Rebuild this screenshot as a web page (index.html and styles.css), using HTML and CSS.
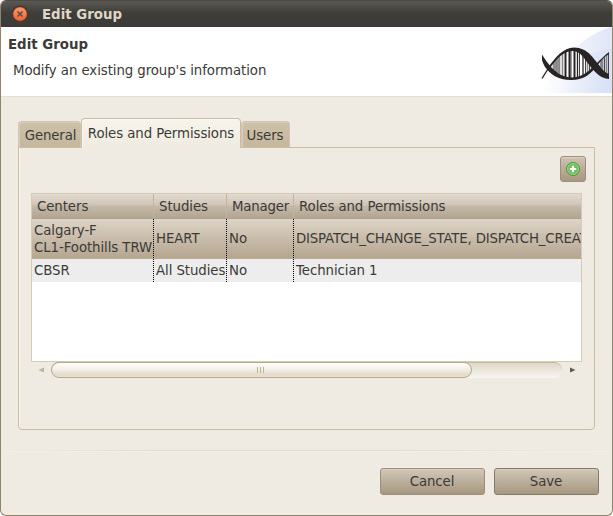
FILE: index.html
```html
<!DOCTYPE html>
<html lang="en">
<head>
<meta charset="utf-8">
<title>Edit Group</title>
<link rel="stylesheet" href="styles.css">
</head>
<body>
<div class="window">
  <div class="titlebar">
    <svg class="close" width="18" height="18" viewBox="0 0 18 18">
      <defs><linearGradient id="cl" x1="0" y1="0" x2="0" y2="1"><stop offset="0" stop-color="#f79b76"/><stop offset=".5" stop-color="#f37f50"/><stop offset="1" stop-color="#f0622f"/></linearGradient></defs>
      <circle cx="9" cy="9" r="8.6" fill="#2b2926"/>
      <circle cx="9" cy="9" r="8.4" fill="none" stroke="#55524b" stroke-width=".6"/>
      <circle cx="9" cy="9" r="7" fill="url(#cl)" stroke="#b5502b" stroke-width=".7"/>
      <path d="M6.5 6.500l5 5M11.500 6.500l-5 5" stroke="#5c4a42" stroke-width="1.500"/>
    </svg>
    <span class="title">Edit Group</span>
  </div>
  <header class="banner">
    <div>
      <h1>Edit Group</h1>
      <p>Modify an existing group's information</p>
    </div>
    <svg class="dna" width="72" height="66" viewBox="540 27 72 66">
      <defs>
        <linearGradient id="bg" x1="0" y1="0" x2="1" y2="0"><stop offset="0" stop-color="#fff"/><stop offset="1" stop-color="#dfe6f8"/></linearGradient>
        <linearGradient id="bg2" x1="0" y1="0" x2="1" y2="0"><stop offset="0" stop-color="#d3dff6" stop-opacity="0"/><stop offset="1" stop-color="#cfdaf4"/></linearGradient>
        <clipPath id="lens"><path d="M549 67C556 57 563 49 574 49 585 49 590 58 596 66 588 75 580 79 571 79 560 78 555 73 549 67ZM596 66L609 53V76Z"/></clipPath>
      </defs>
      <path d="M540 93C560 60 585 33 612 27V93Z" fill="url(#bg)"/>
      <path d="M560 93C572 62 590 50 612 49V93Z" fill="url(#bg2)" opacity=".5"/>
      <g clip-path="url(#lens)">
        <rect x="553" y="45" width="40" height="36" fill="#fff"/>
        <path d="M553.500 45v36M556.500 45v36M559.500 45v36M562.500 45v36M587.500 45v36M591.500 45v36M594.500 45v36M602.500 45v36M606.500 45v36" stroke="#88888b" stroke-width="1.600"/>
        <path d="M555 45v36M558 45v36M571 45v36M579.500 45v36M585.500 45v36M589.500 45v36M601 45v36M604.500 45v36M608.500 45v36" stroke="#464447"/>
        <path d="M565.500 45v36M569.500 45v36M574.500 45v36" stroke="#282425" stroke-width="2"/>
        <path d="M577.500 45v36M583 45v36" stroke="#282425" stroke-width="1.300"/>
      </g>
      <path d="M542 78.500L549.500 66.500" stroke="#282425" stroke-width="1.400"/>
      <path d="M549 66C556 57 563 48 574 47.500 588 48 593 58 599 65 602 69.500 605 73 609 74V79C600 78.500 595 72 590 66 584 59 581 51.500 573 51 564 51 557 58 550 68Z" fill="#282425"/>
      <path d="M542 54.500C545 59 548 64 552 68 558 74 564 77.500 572 77.500 583 77 589 71 596 64 600 60 605 55 609 52V54C604 57 600 62 597 66 591 73 585 80 571 80 558 80 550 74 545 67 543.500 64 542.500 62 542 60Z" fill="#282425"/>
    </svg>
  </header>
  <main>
    <div class="tabs">
      <div class="tab general">General</div>
      <div class="tab active">Roles and Permissions</div>
      <div class="tab users">Users</div>
    </div>
    <section class="panel">
      <div class="toolbar">
        <button class="add" aria-label="Add">
          <svg width="16" height="16" viewBox="0 0 16 16"><circle cx="8" cy="8" r="6.500" fill="#72bd5c" stroke="#46963d"/><circle cx="8" cy="8" r="5.500" fill="none" stroke="#a5d997" stroke-width=".8"/><path d="M8 4.800v6.400M4.800 8h6.400" stroke="#fff" stroke-width="2.200"/></svg>
        </button>
      </div>
      <div class="table">
        <div class="row head"><div>Centers</div><div>Studies</div><div class="manager">Manager</div><div>Roles and Permissions</div></div>
        <div class="row selected"><div>Calgary-F<br>CL1-Foothills TRW</div><div>HEART</div><div>No</div><div class="permissions">DISPATCH_CHANGE_STATE, DISPATCH_CREAT</div></div>
        <div class="row alt"><div>CBSR</div><div>All Studies</div><div>No</div><div>Technician 1</div></div>
      </div>
      <div class="scroll">
        <svg width="20" height="16" viewBox="0 0 20 16"><path d="M13 5.500v5L7.500 8z" fill="#bfb49c"/></svg>
        <div class="trough"><div class="thumb"><i></i><i></i><i></i></div></div>
        <svg width="20" height="16" viewBox="0 0 20 16"><path d="M8 5.500v5L13.500 8z" fill="#5d5a54"/></svg>
      </div>
    </section>
    <div class="rule"></div>
    <div class="actions"><button class="btn cancel">Cancel</button><button class="btn save">Save</button></div>
  </main>
</div>
</body>
</html>
```
FILE: styles.css
```css
* { box-sizing: border-box; }
body { margin: 0; background: #fff; overflow: hidden; color: #3c3b37; font: 13.333px/17px "DejaVu Sans", sans-serif; letter-spacing: -0.08px; }
button { font: inherit; color: inherit; letter-spacing: inherit; padding: 0; }
.window { width: 613px; height: 516px; border: 1px solid #92836b; border-top-color: #4d4b45; border-radius: 6px; overflow: hidden; background: #efebe3; }
.titlebar { height: 26px; display: flex; align-items: center; padding-left: 10px; gap: 13px; background: linear-gradient(#5a5852, #3e3d39 48%, #3c3b37); color: #dfd8c8; font-weight: bold; letter-spacing: 0; }
.close { display: block; }
.banner { height: 70px; background: #fff; border-bottom: 1px solid #e6dfd0; display: flex; justify-content: space-between; }
h1 { margin: 9px 0 0 7px; font-size: 13.333px; line-height: 17px; letter-spacing: 0; }
p { margin: 9px 0 0 12px; }
main { padding: 21px 17px 0; }
.tabs { display: flex; align-items: flex-end; height: 29px; }
.tab { height: 26px; border: 1px solid #d1c5ad; border-bottom: 0; background: linear-gradient(#cec1a9, #c5b79e); border-radius: 4px 4px 0 0; white-space: nowrap; text-align: center; padding-top: 5px; box-shadow: inset 1px 1px #d8cdb8; }
.tab.general { width: 63px; padding-left: 2px; letter-spacing: -0.15px; }
.tab.active { width: 160px; height: 30px; margin-bottom: -1px; padding-top: 6px; background: linear-gradient(#f7f4ed, #efebe0); border-color: #cbbda2; box-shadow: inset 1px 1px #faf8f3; z-index: 1; }
.tab.users { width: 49px; padding-right: 1px; }
.panel { height: 283px; border: 1px solid #cbbda2; border-radius: 0 0 4px 4px; box-shadow: inset 1px 0 #f8f5ef; padding: 8px 12px 0; }
.toolbar { display: flex; justify-content: flex-end; height: 37px; padding-right: 8px; margin-right: -12px; }
.add { width: 26px; height: 26px; border: 1px solid #9e8f79; border-radius: 3px; background: linear-gradient(#d0c3b2, #b9aa95 55%, #a99880); display: grid; place-items: center; box-shadow: inset 0 1px #ddd2c4; }
.table { width: 551px; height: 169px; border: 1px solid #d5cbb9; background: #fff; overflow: hidden; }
.row { display: grid; grid-template-columns: 122px 73px 67px 287px; white-space: nowrap; }
.row > div { display: flow-root; overflow: hidden; padding-left: 2px; border-right: 1px dotted #000; }
.row > div:last-child { border-right: 0; }
.head { height: 25px; background: linear-gradient(#e3dbd0, #d0c5b7 45%, #c5b9a9 50%, #b2a591); border-bottom: 1px solid #b0a28c; }
.row.head > div { padding: 4px 0 0 5px; border-right: 1px solid #c1b5a1; }
.row.head > div:last-child { border-right: 0; }
.manager { letter-spacing: -0.2px; }
.selected { height: 40px; background: linear-gradient(#ded5c6, #c9bcab 50%, #b5a690); border-bottom: 1px solid #bda98b; }
.selected > div { padding-top: 11px; }
.selected > div:first-child { padding-top: 3px; }
.permissions { letter-spacing: -0.18px; }
.alt { height: 23px; background: #ededed; }
.alt > div { padding-top: 3px; }
.scroll { display: flex; width: 551px; height: 16px; }
.trough { width: 511px; border-radius: 8px; background: linear-gradient(#dfd7c8, #f8f6f2); border-top: 1px solid #c6b99f; }
.thumb { width: 421px; height: 16px; margin-top: -1px; border: 1px solid #b7a889; border-radius: 8px; background: linear-gradient(#fff, #f1ece4 50%, #e2dacb 85%, #e9e1d3); display: flex; justify-content: center; align-items: center; gap: 2px; padding-right: 2px; }
.thumb i { width: 1px; height: 6px; background: #c1b498; }
.rule { height: 2px; margin: 20px -13px 0; background: linear-gradient(90deg, transparent, #e4dccb 25%, #e4dccb 65%, transparent); border-bottom: 1px solid #f3efe7; }
.actions { display: flex; justify-content: flex-end; gap: 9px; margin: 16px -4px 0 0; }
.btn { width: 105px; height: 27px; border: 1px solid #9e8f79; border-radius: 3px; background: linear-gradient(#d2c7b8, #bbae9b 50%, #a79880); box-shadow: inset 0 1px #d8cebf; }
.btn.cancel, .btn.save { padding-right: 1px; }
.save { border-color: #877a66; }
```
